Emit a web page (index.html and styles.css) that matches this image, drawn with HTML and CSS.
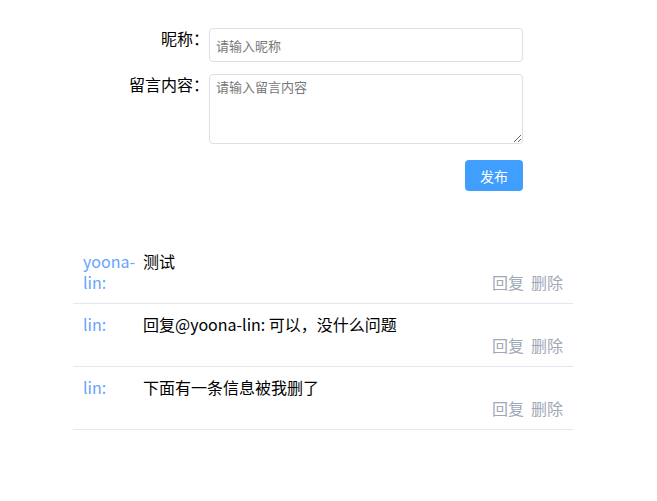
FILE: index.html
```html
<!DOCTYPE html>
<html lang="zh-CN">
<head>
<meta charset="utf-8">
<title>留言板</title>
<link rel="stylesheet" href="styles.css">
</head>
<body>
<div class="page">
  <form class="form">
    <div class="form-row">
      <label class="form-label">昵称：</label>
      <input class="field input" type="text" placeholder="请输入昵称">
    </div>
    <div class="form-row">
      <label class="form-label">留言内容：</label>
      <textarea class="field textarea" placeholder="请输入留言内容"></textarea>
    </div>
    <div class="form-actions">
      <button type="button" class="btn-primary">发布</button>
    </div>
  </form>

  <ul class="comments">
    <li class="comment">
      <span class="comment-name">yoona-lin:</span>
      <span class="comment-text">测试</span>
      <span class="comment-actions"><a class="action">回复</a><a class="action">删除</a></span>
    </li>
    <li class="comment">
      <span class="comment-name">lin:</span>
      <span class="comment-text">回复@yoona-lin: 可以，没什么问题</span>
      <span class="comment-actions"><a class="action">回复</a><a class="action">删除</a></span>
    </li>
    <li class="comment">
      <span class="comment-name">lin:</span>
      <span class="comment-text">下面有一条信息被我删了</span>
      <span class="comment-actions"><a class="action">回复</a><a class="action">删除</a></span>
    </li>
  </ul>
</div>
</body>
</html>
```

FILE: styles.css
```css
* { box-sizing: border-box; }

html, body {
  margin: 0;
  padding: 0;
  background: #ffffff;
}

body {
  font-family: "Noto Sans CJK SC", "Noto Sans", sans-serif;
  font-size: 16px;
  line-height: 21px;
  color: #000;
}

.page {
  padding-top: 28px;
}

.form {
  width: 424px;
  margin-left: 99px;
  display: flex;
  flex-direction: column;
  gap: 12px;
}

.form-row {
  display: flex;
  align-items: flex-start;
}

.form-label {
  width: 110px;
  flex: none;
  text-align: right;
  font-size: 16px;
  line-height: 21px;
  color: #000;
}

.field {
  width: 314px;
  flex: none;
  border: 1px solid #dcdfe6;
  border-radius: 4px;
  font-family: "Noto Sans CJK SC", "Noto Sans", sans-serif;
  font-size: 13px;
  color: #333;
  outline: none;
  background: #fff;
}

.input {
  height: 34px;
  padding: 0 6px;
}

.textarea {
  height: 70px;
  padding: 3px 6px;
  line-height: 18px;
  resize: vertical;
}

.field::placeholder {
  color: #777;
}

.form-actions {
  display: flex;
  justify-content: flex-end;
  margin-top: 4px;
}

.btn-primary {
  width: 58px;
  height: 31px;
  border: none;
  border-radius: 4px;
  background: #409eff;
  color: #fff;
  font-family: "Noto Sans CJK SC", "Noto Sans", sans-serif;
  font-size: 14px;
  padding: 0;
  cursor: pointer;
}

.comments {
  list-style: none;
  margin: 50px 0 0 73px;
  padding: 0;
  width: 500px;
}

.comment {
  display: grid;
  grid-template-columns: 60px 1fr;
  grid-template-rows: auto auto;
  padding: 10px 10px;
  border-bottom: 1px solid #e4e7ed;
}

.comment-name {
  grid-row: 1 / span 2;
  grid-column: 1;
  color: #66a3ff;
}

.comment-text {
  grid-row: 1;
  grid-column: 2;
}

.comment-actions {
  grid-row: 2;
  grid-column: 2;
  display: flex;
  justify-content: flex-end;
  align-self: end;
  gap: 7px;
}

.action {
  color: #a0a8b8;
  cursor: pointer;
}
```
